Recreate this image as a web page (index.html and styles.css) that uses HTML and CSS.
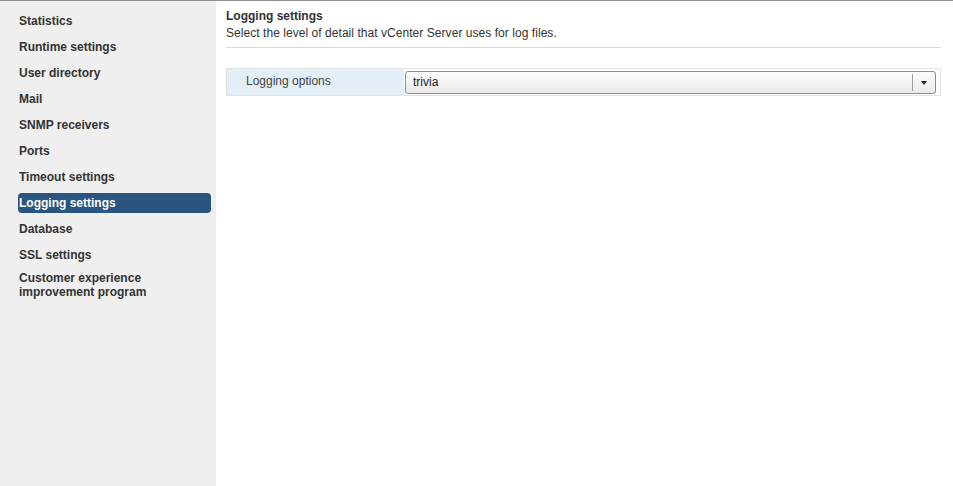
FILE: index.html
```html
<!DOCTYPE html>
<html lang="en">
<head>
<meta charset="UTF-8">
<title>Logging settings</title>
<link rel="stylesheet" href="styles.css">
</head>
<body>
<div class="page">
  <!-- Left navigation -->
  <aside class="side">
    <div class="item">Statistics</div>
    <div class="item">Runtime settings</div>
    <div class="item">User directory</div>
    <div class="item">Mail</div>
    <div class="item">SNMP receivers</div>
    <div class="item">Ports</div>
    <div class="item">Timeout settings</div>
    <div class="item active">Logging settings</div>
    <div class="item">Database</div>
    <div class="item">SSL settings</div>
    <div class="item multi">Customer experience improvement program</div>
  </aside>

  <!-- Content -->
  <main class="content">
    <h1 class="title">Logging settings</h1>
    <p class="desc">Select the level of detail that vCenter Server uses for log files.</p>
    <div class="rule"></div>
    <div class="row">
      <div class="label">Logging options</div>
      <div class="field">
        <div class="combo">
          <span class="value">trivia</span>
          <span class="btn"><span class="arrow"></span></span>
        </div>
      </div>
    </div>
  </main>
</div>
</body>
</html>
```

FILE: styles.css
```css
html,body{margin:0;padding:0;height:100%;}
body{font-family:"Liberation Sans", Arial, sans-serif;font-size:12px;color:#333;background:#fff;}
.page{display:flex;height:100%;border-top:1px solid #8f8f8f;box-sizing:border-box;}

/* Sidebar */
.side{width:216px;flex:none;background:#efefef;padding-top:10px;box-sizing:border-box;}
.item{margin:0 5px 6px 18px;padding:0 2px 0 1px;line-height:20px;font-weight:bold;color:#333;border-radius:4px;}
.item.active{background:#2b5581;color:#fff;}
.item.multi{line-height:14px;width:150px;}

/* Content */
.content{flex:1;padding:7px 12px 0 10px;}
.title{margin:0;font-size:12px;font-weight:bold;line-height:17px;color:#333;}
.desc{margin:0;line-height:17px;color:#333;letter-spacing:0.05px;}
.rule{margin-top:5px;border-top:1px solid #dcdcdc;}
.row{display:flex;margin-top:20px;height:28px;border:1px solid #e3e3e3;box-sizing:border-box;}
.label{width:177px;background:#e3eef6;padding-left:19px;line-height:24px;color:#444;box-sizing:border-box;}
.field{flex:1;padding:2px 4px 0 1px;}
.combo{display:flex;height:23px;border:1px solid #8e8e8e;border-radius:3px;box-sizing:border-box;background:linear-gradient(#fdfdfd,#e9e9e9);}
.value{flex:1;padding-left:7px;line-height:21px;color:#222;}
.btn{width:22px;border-left:1px solid #9a9a9a;margin:2px 0;display:flex;align-items:center;justify-content:center;}
.arrow{width:0;height:0;border-left:3px solid transparent;border-right:3px solid transparent;border-top:4px solid #222;}
```
